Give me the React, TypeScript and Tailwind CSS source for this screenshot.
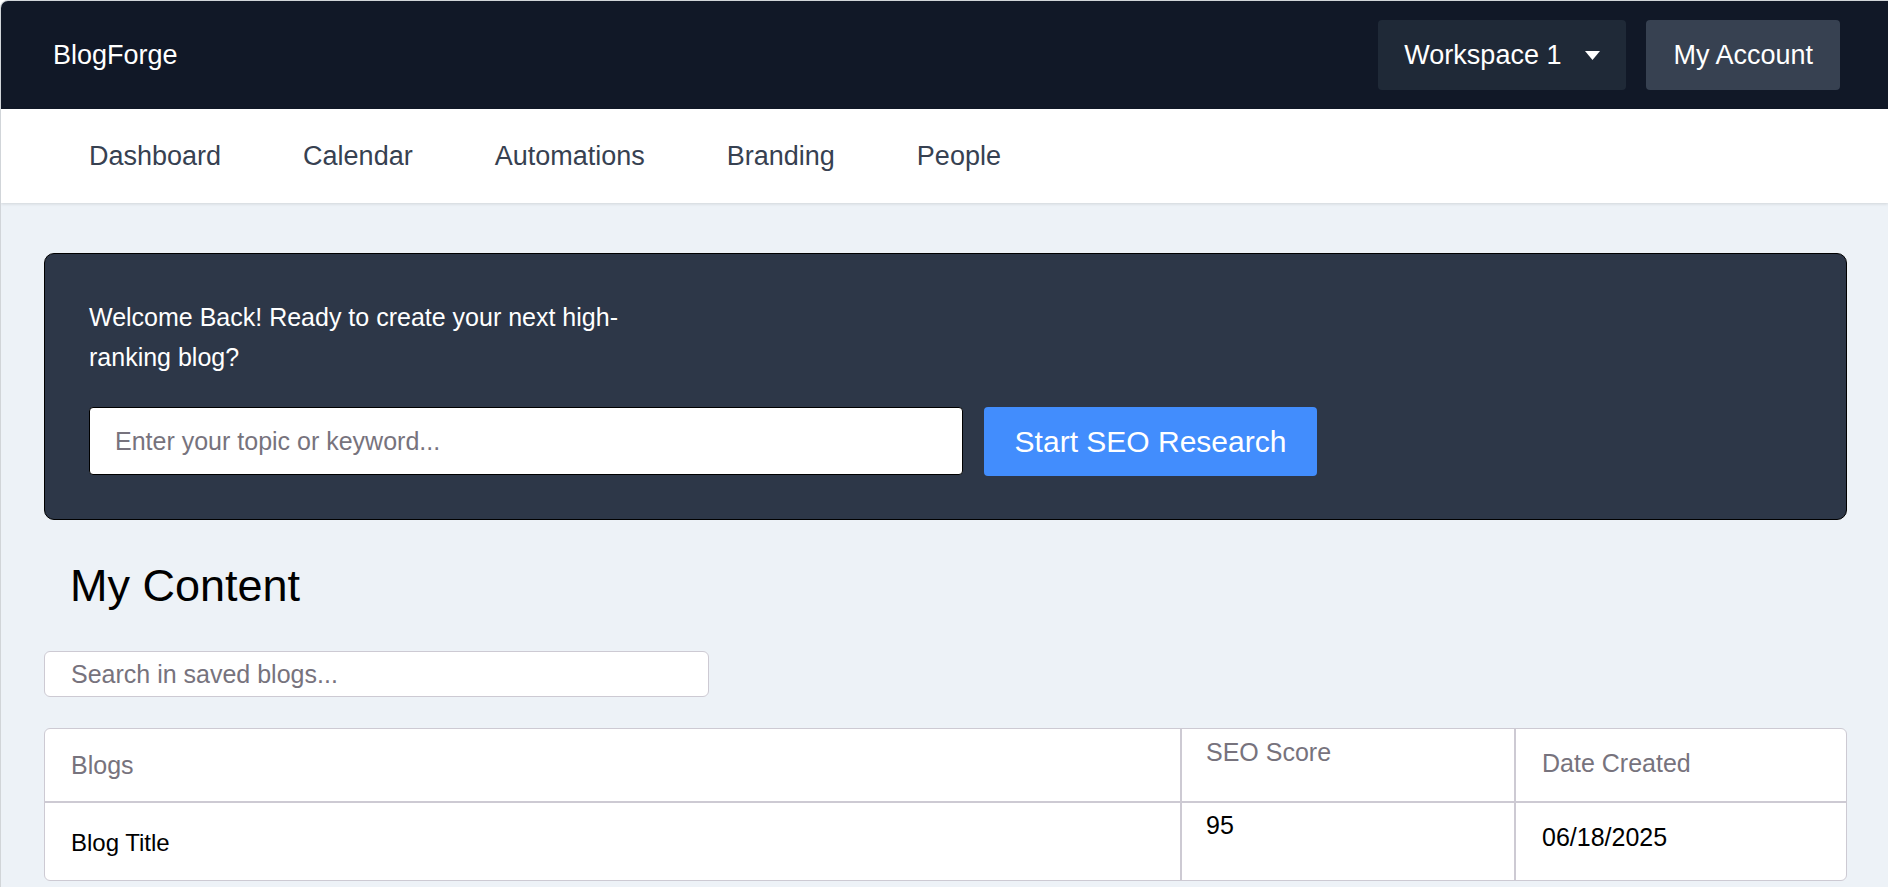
import { useState } from "react"

const blogs = [{ title: "Blog Title", score: 95, created: "06/18/2025" }]

const navItems = ["Dashboard", "Calendar", "Automations", "Branding", "People"]

function Caret() {
  return (
    <svg width="15" height="9" viewBox="0 0 15 9" aria-hidden="true">
      <polygon points="0,0 15,0 7.5,9" fill="#ffffff" />
    </svg>
  )
}

export default function App() {
  const [topic, setTopic] = useState("")
  const [query, setQuery] = useState("")

  const rows = blogs.filter((b) => b.title.toLowerCase().includes(query.toLowerCase()))

  return (
    <div className="min-h-screen bg-[#edf2f7] font-['Liberation_Sans',Arial,sans-serif] border-t border-l border-[#80808040] rounded-tl-[8px] overflow-hidden">
      {/* Top bar */}
      <header className="h-[108px] bg-[#111827] flex items-center justify-between pl-[52px] pr-[48px]">
        <a href="#" className="text-[27px] text-white leading-none">
          BlogForge
        </a>
        <div className="flex items-center gap-[20px]">
          <button className="h-[70px] flex items-center gap-[24px] pl-[26px] pr-[26px] rounded-[4px] bg-[#1f2937] text-white text-[27px]">
            <span>Workspace 1</span>
            <Caret />
          </button>
          <button className="h-[70px] px-[27px] rounded-[4px] bg-[#374151] text-white text-[27px]">
            My Account
          </button>
        </div>
      </header>

      {/* Tabs */}
      <nav className="h-[94px] bg-white shadow-[0_1px_3px_rgba(0,0,0,0.12)] flex items-center gap-[82px] pl-[88px]">
        {navItems.map((item) => (
          <a key={item} href="#" className="text-[27px] text-[#374151]">
            {item}
          </a>
        ))}
      </nav>

      <main className="pl-[43px] pr-[41px] pt-[50px]">
        {/* Welcome banner */}
        <section className="bg-[#2d3748] border border-black rounded-[10px] pt-[43px] pb-[43px] pl-[44px]">
          <p className="max-w-[560px] text-white text-[25px] leading-[40px]">
            Welcome Back! Ready to create your next high-ranking blog?
          </p>
          <div className="mt-[30px] flex gap-[21px]">
            <input
              value={topic}
              onChange={(e) => setTopic(e.target.value)}
              placeholder="Enter your topic or keyword..."
              className="w-[874px] h-[68px] bg-white border border-black rounded-[4px] px-[25px] text-[25px] text-black placeholder:text-[#77737d] outline-none"
            />
            <button className="w-[333px] h-[69px] rounded-[4px] bg-[#428dfd] text-white text-[30px]">
              Start SEO Research
            </button>
          </div>
        </section>

        <h1 className="mt-[41px] ml-[26px] text-[45px] leading-[49px] text-black">My Content</h1>

        <input
          value={query}
          onChange={(e) => setQuery(e.target.value)}
          placeholder="Search in saved blogs..."
          className="mt-[41px] block w-[665px] h-[46px] bg-white border border-[#cdcad3] rounded-[6px] pl-[26px] text-[25px] text-black placeholder:text-[#77737d] outline-none"
        />

        {/* Blog table */}
        <div className="mt-[31px] bg-white border border-[#cdcad3] rounded-[6px] overflow-hidden">
          <div className="flex h-[74px] border-b-2 border-[#cdcad3] text-[25px] text-[#77737d] leading-[28px]">
            <div className="flex-1 pl-[26px] pt-[22px]">Blogs</div>
            <div className="w-[334px] border-l-2 border-[#cdcad3] pl-[24px] pt-[9px]">SEO Score</div>
            <div className="w-[332px] border-l-2 border-[#cdcad3] pl-[26px] pt-[20px]">Date Created</div>
          </div>
          {rows.map((b) => (
            <div key={b.title} className="flex h-[77px] text-[25px] text-black leading-[28px]">
              <div className="flex-1 pl-[26px] pt-[26px] text-[24px]">{b.title}</div>
              <div className="w-[334px] border-l-2 border-[#cdcad3] pl-[24px] pt-[8px]">{b.score}</div>
              <div className="w-[332px] border-l-2 border-[#cdcad3] pl-[26px] pt-[20px]">{b.created}</div>
            </div>
          ))}
        </div>
      </main>
    </div>
  )
}
